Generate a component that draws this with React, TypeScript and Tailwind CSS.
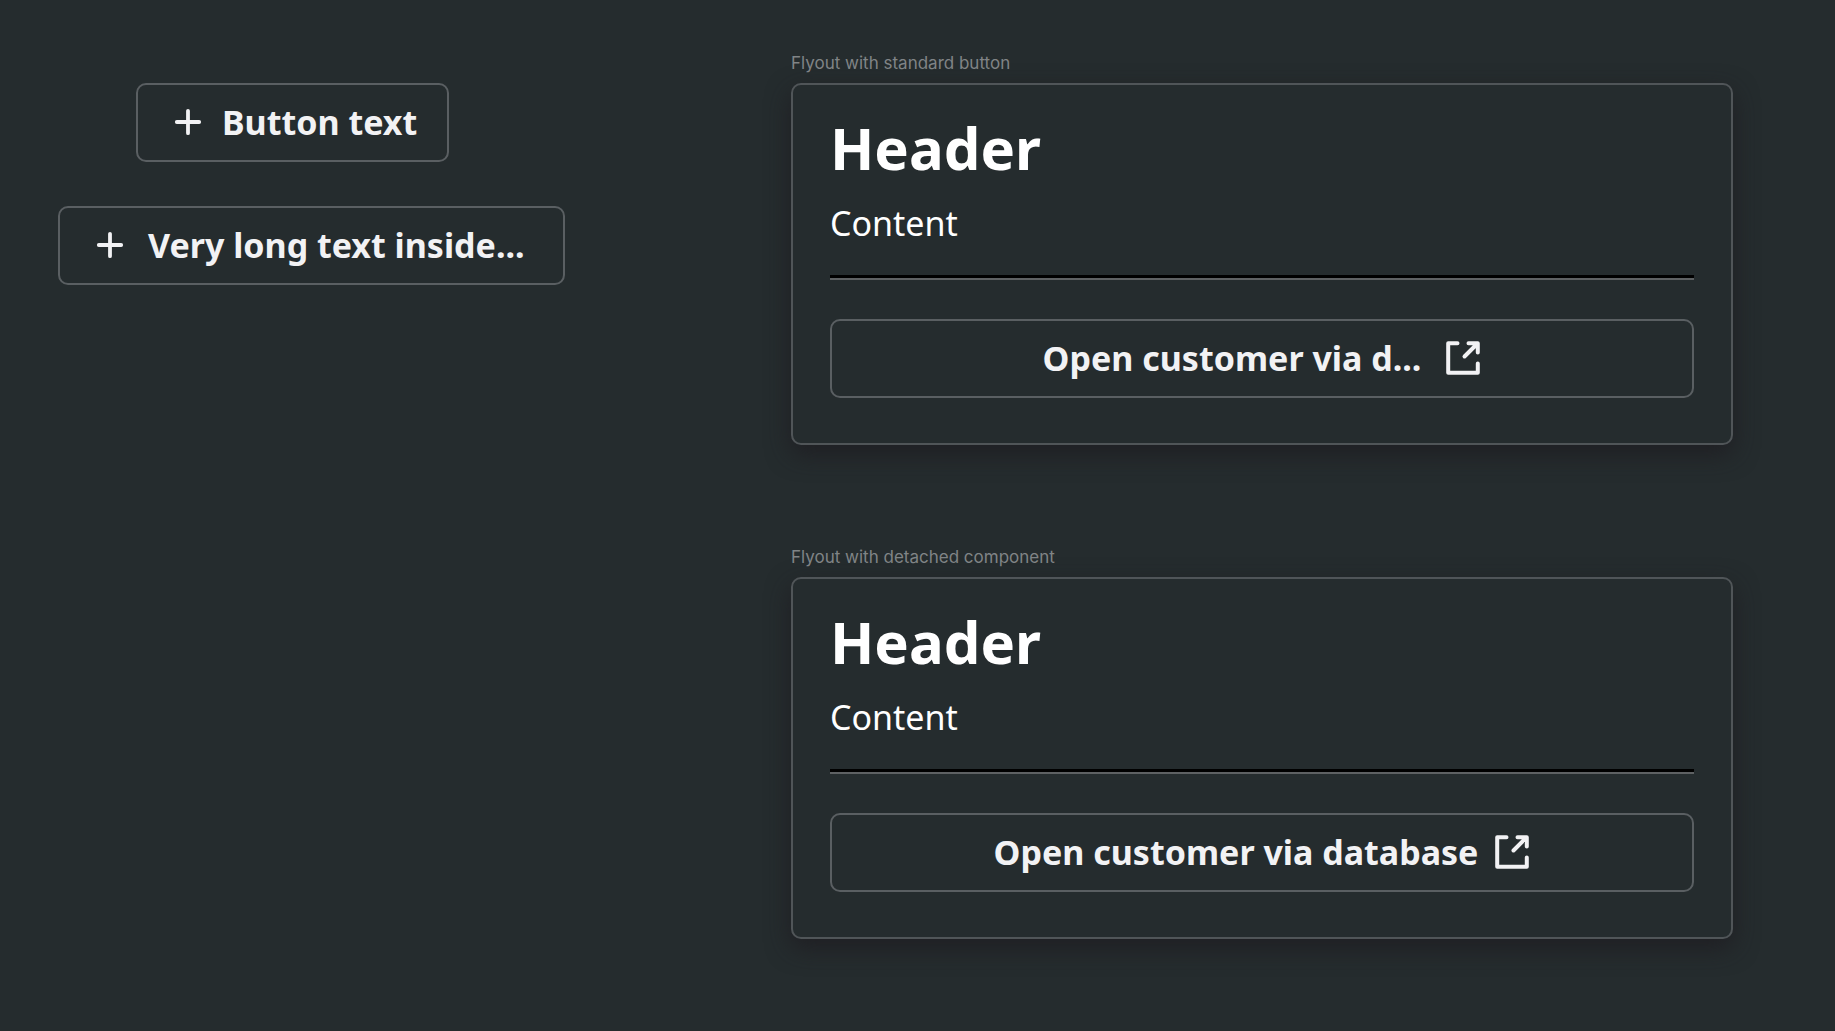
import type { ReactNode } from "react";

function PlusIcon() {
  return (
    <svg viewBox="0 0 36 36" className="size-9 shrink-0" fill="none" stroke="currentColor" strokeWidth="3.8" strokeLinecap="round" aria-hidden="true">
      <path d="M18 6.8v22.4M6.8 18h22.4" />
    </svg>
  );
}

function OpenIcon() {
  return (
    <svg viewBox="0 0 36 36" className="size-9 shrink-0" fill="none" stroke="currentColor" strokeWidth="4" strokeLinecap="round" strokeLinejoin="round" aria-hidden="true">
      <path d="M12.5 3.2H3.2v29.6h29.6V23.5" />
      <path d="M23.5 3.2h9.3v9.3M32 4L19.5 16.5" />
    </svg>
  );
}

function OutlineButton({ children, className }: { children: ReactNode; className: string }) {
  return (
    <button
      type="button"
      className={
        "flex h-[79px] items-center rounded-[10px] border-2 border-[#5a5f62] pb-0.5 text-[34px] leading-12 font-bold whitespace-nowrap text-[#f2f2f4] " +
        className
      }
    >
      {children}
    </button>
  );
}

function Flyout({ label, action, gap }: { label: string; action: string; gap: string }) {
  return (
    <section>
      <p className="mb-2 font-['Inter',sans-serif] text-[17px] leading-6 text-[#808486]">{label}</p>
      <div className="rounded-[10px] border-2 border-[#505558] bg-[#252c2e] px-[37px] pt-6 pb-[45px] shadow-[0_9px_24px_rgba(30,28,32,0.8)]">
        <h2 className="text-[58px] leading-[78px] font-bold text-white">Header</h2>
        <p className="mt-3 text-[34px] leading-12 text-white">Content</p>
        <hr className="mt-7 mb-[39px] h-[5px] border-t-[3px] border-b-2 border-t-black border-b-[#5e6163]" />
        <OutlineButton className={"w-full justify-center " + gap}>
          <span>{action}</span>
          <OpenIcon />
        </OutlineButton>
      </div>
    </section>
  );
}

export default function App() {
  return (
    <main className="grid min-h-screen grid-cols-[733fr_942fr] bg-[#252c2e] pr-[102px] pl-[58px] font-['Noto_Sans',sans-serif]">
      <div className="flex flex-col items-start gap-11 pt-[83px]">
        <OutlineButton className="ml-[78px] gap-4 pr-[30px] pl-8">
          <PlusIcon />
          <span>Button text</span>
        </OutlineButton>
        <OutlineButton className="gap-5 pr-[38px] pl-8">
          <PlusIcon />
          <span>Very long text inside...</span>
        </OutlineButton>
      </div>
      <div className="flex flex-col gap-[100px] pt-[51px]">
        <Flyout label="Flyout with standard button" action="Open customer via d..." gap="gap-6" />
        <Flyout label="Flyout with detached component" action="Open customer via database" gap="gap-4" />
      </div>
    </main>
  );
}
